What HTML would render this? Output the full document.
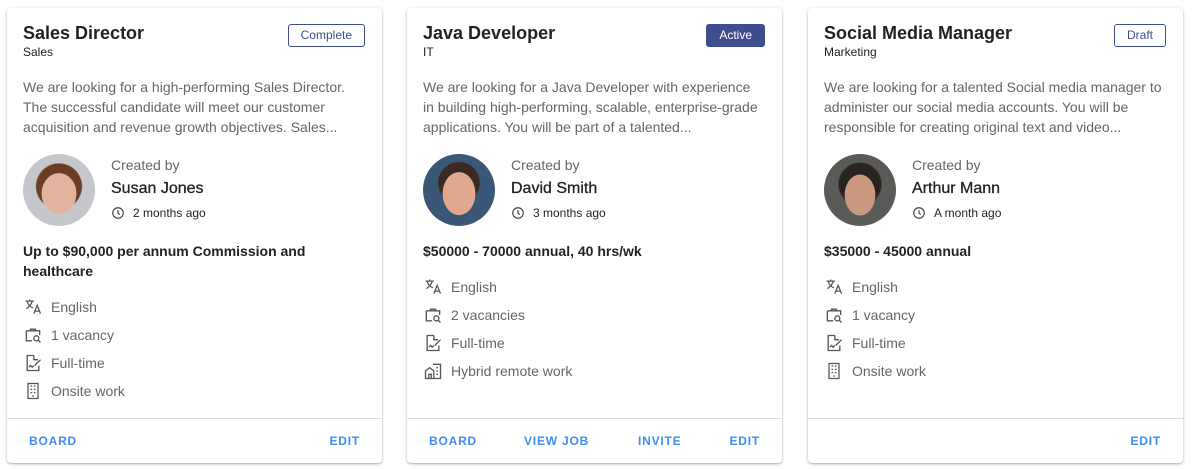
<!DOCTYPE html><html><head><style>
body{margin:0;width:1192px;height:469px;background:#fff;font-family:"Liberation Sans",Arial,sans-serif;position:relative;overflow:hidden}
.card{position:absolute;top:8px;width:375px;height:455px;background:#fff;border-radius:4px;box-shadow:0 1px 3px rgba(0,0,0,.25),0 1px 1px rgba(0,0,0,.12)}
.t{position:absolute;left:16px;top:15px;font-size:18px;font-weight:bold;color:#222}
.sub{position:absolute;left:16px;top:37px;font-size:12px;color:#222}
.badge{position:absolute;right:17px;top:16px;height:21px;border:1px solid #3f4d8f;border-radius:3px;font-size:12px;color:#3f4d8f;line-height:21px;padding:0 12px}
.badge.act{background:#3f4d8f;color:#fff}
.desc{position:absolute;left:16px;top:69px;width:338px;font-size:14px;line-height:20px;color:#666}
.av{position:absolute;left:16px;top:146px;width:72px;height:72px;border-radius:50%;overflow:hidden}
.cb{position:absolute;left:104px;top:149px;font-size:14px;color:#666}
.nm{position:absolute;left:104px;top:172px;font-size:16px;color:#222;-webkit-text-stroke:0.3px #222}
.ago{position:absolute;left:104px;top:198px;font-size:12px;color:#222;display:flex;align-items:center;gap:8px}
.sal{position:absolute;left:16px;width:330px;font-size:14px;font-weight:bold;color:#222;line-height:20px}
.item{position:absolute;left:16px;font-size:14px;color:#666;display:flex;align-items:center;gap:8px}
.item svg{width:20px;height:20px}
.div{position:absolute;left:0;right:0;top:410px;border-top:1px solid #ddd}
.btn{position:absolute;top:426px;font-size:12px;font-weight:bold;letter-spacing:0.8px;color:#3d8ef5}
</style></head><body>
<svg width="0" height="0" style="position:absolute"><defs>
<symbol id="lang" viewBox="0 0 24 24"><path d="M3 5h10M8 3v2M5 5c1 4 4 7 7 8M11 5c-1 4-4 7-7 9M13 20l4-10 4 10M14.5 17h5" fill="none" stroke="#555" stroke-width="1.5"/></symbol>
<symbol id="bag" viewBox="0 0 24 24"><path d="M9 7V5h6v2M4 7h16v5M4 7v12h7" fill="none" stroke="#555" stroke-width="1.6"/><circle cx="16" cy="16" r="3" fill="none" stroke="#555" stroke-width="1.6"/><path d="M18 18l3 3" stroke="#555" stroke-width="1.6"/></symbol>
<symbol id="doc" viewBox="0 0 24 24"><path d="M13 3H5v18h14v-6M13 3v5h5" fill="none" stroke="#555" stroke-width="1.6"/><path d="M7 17l2-2 2 2 2-2M14 15l7-7" fill="none" stroke="#555" stroke-width="1.6"/></symbol>
<symbol id="bld" viewBox="0 0 24 24"><path d="M6 3h12v18H6zM9 6h2M13 6h2M9 10h2M13 10h2M9 14h2M13 14h2M11 18h2" fill="none" stroke="#555" stroke-width="1.5"/></symbol>
<symbol id="hyb" viewBox="0 0 24 24"><path d="M3 21V12l5-4 5 4v9H3zM7 21v-5h3v5M12 4h9v17h-8M16 8h2M16 12h2M16 16h2" fill="none" stroke="#555" stroke-width="1.6"/></symbol>
<symbol id="clk" viewBox="0 0 24 24"><circle cx="12" cy="12" r="9" fill="none" stroke="#444" stroke-width="2"/><path d="M12 7v5l3 3" fill="none" stroke="#444" stroke-width="2"/></symbol>
</defs></svg>

<div class="card" style="left:7px">
<div class="t">Sales Director</div><div class="sub">Sales</div><div class="badge">Complete</div>
<div class="desc">We are looking for a high-performing Sales Director. The successful candidate will meet our customer acquisition and revenue growth objectives. Sales...</div>
<div class="av" style="background:radial-gradient(ellipse 34% 40% at 50% 55%,#e2b49e 0 70%,transparent 72%),radial-gradient(circle at 50% 45%,#6a3d24 0 42%,#c5c7cc 44%)"></div>
<div class="cb">Created by</div><div class="nm">Susan Jones</div>
<div class="ago"><svg width="14" height="14"><use href="#clk"/></svg>2 months ago</div>
<div class="sal" style="top:233px">Up to $90,000 per annum Commission and healthcare</div>
<div class="item" style="top:289px"><svg><use href="#lang"/></svg>English</div>
<div class="item" style="top:317px"><svg><use href="#bag"/></svg>1 vacancy</div>
<div class="item" style="top:345px"><svg><use href="#doc"/></svg>Full-time</div>
<div class="item" style="top:373px"><svg><use href="#bld"/></svg>Onsite work</div>
<div class="div"></div>
<div class="btn" style="left:22px">BOARD</div><div class="btn" style="right:22px">EDIT</div>
</div>

<div class="card" style="left:407px">
<div class="t">Java Developer</div><div class="sub">IT</div><div class="badge act">Active</div>
<div class="desc">We are looking for a Java Developer with experience in building high-performing, scalable, enterprise-grade applications. You will be part of a talented...</div>
<div class="av" style="background:radial-gradient(ellipse 32% 42% at 50% 55%,#e0a88e 0 70%,transparent 72%),radial-gradient(circle at 50% 40%,#3b2a22 0 36%,#3a5778 38%)"></div>
<div class="cb">Created by</div><div class="nm">David Smith</div>
<div class="ago"><svg width="14" height="14"><use href="#clk"/></svg>3 months ago</div>
<div class="sal" style="top:233px">$50000 - 70000 annual, 40 hrs/wk</div>
<div class="item" style="top:269px"><svg><use href="#lang"/></svg>English</div>
<div class="item" style="top:297px"><svg><use href="#bag"/></svg>2 vacancies</div>
<div class="item" style="top:325px"><svg><use href="#doc"/></svg>Full-time</div>
<div class="item" style="top:353px"><svg><use href="#hyb"/></svg>Hybrid remote work</div>
<div class="div"></div>
<div class="btn" style="left:22px">BOARD</div><div class="btn" style="left:117px">VIEW JOB</div><div class="btn" style="left:231px">INVITE</div><div class="btn" style="right:22px">EDIT</div>
</div>

<div class="card" style="left:808px">
<div class="t">Social Media Manager</div><div class="sub">Marketing</div><div class="badge">Draft</div>
<div class="desc">We are looking for a talented Social media manager to administer our social media accounts. You will be responsible for creating original text and video...</div>
<div class="av" style="background:radial-gradient(ellipse 30% 40% at 50% 57%,#c99a80 0 70%,transparent 72%),radial-gradient(circle at 50% 42%,#2a2420 0 38%,#5a5a58 40%)"></div>
<div class="cb">Created by</div><div class="nm">Arthur Mann</div>
<div class="ago"><svg width="14" height="14"><use href="#clk"/></svg>A month ago</div>
<div class="sal" style="top:233px">$35000 - 45000 annual</div>
<div class="item" style="top:269px"><svg><use href="#lang"/></svg>English</div>
<div class="item" style="top:297px"><svg><use href="#bag"/></svg>1 vacancy</div>
<div class="item" style="top:325px"><svg><use href="#doc"/></svg>Full-time</div>
<div class="item" style="top:353px"><svg><use href="#bld"/></svg>Onsite work</div>
<div class="div"></div>
<div class="btn" style="right:22px">EDIT</div>
</div>
</body></html>
